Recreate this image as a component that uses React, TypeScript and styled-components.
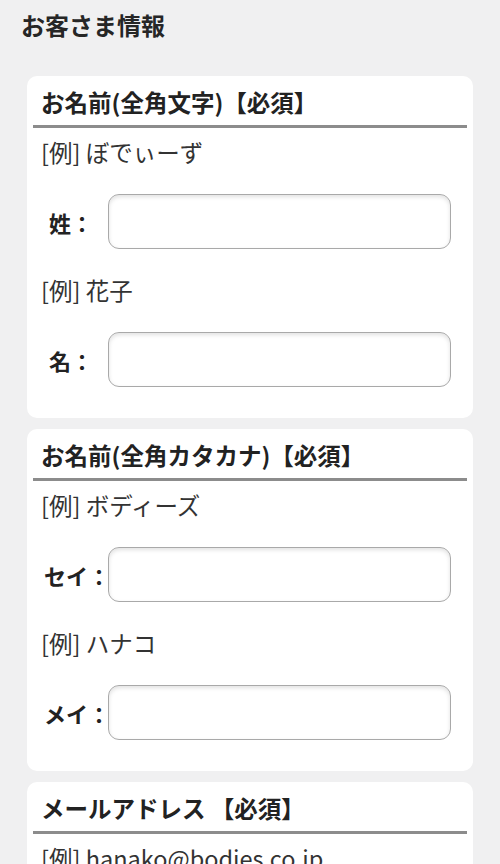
import React from "react";
import styled, { createGlobalStyle } from "styled-components";

const GlobalStyle = createGlobalStyle`
  html, body {
    margin: 0;
    padding: 0;
    background: #f0f0f1;
  }
  body {
    font-family: "Noto Sans CJK JP", "Noto Sans", "Liberation Sans", sans-serif;
    color: #222;
  }
`;

const Page = styled.div`
  padding: 0 27px 20px 27px;
  display: flex;
  flex-direction: column;
  gap: 11px;
`;

const PageTitle = styled.h1`
  margin: 0 0 -11px -6px;
  height: 76px;
  box-sizing: border-box;
  padding-top: 8px;
  font-size: 24px;
  line-height: 34px;
  font-weight: 700;
  color: #262626;
`;

const Card = styled.section`
  background: #fff;
  border-radius: 10px;
  padding: 0 6px 31px 6px;
`;

const CardHeader = styled.h2`
  margin: 0;
  padding: 11px 0 8px 8px;
  font-size: 23.5px;
  line-height: 30px;
  font-weight: 700;
  color: #222;
  border-bottom: 3px solid #8c8c8c;
  white-space: nowrap;
`;

const Example = styled.p`
  margin: 9px 0 0 8px;
  font-size: 23.5px;
  line-height: 30px;
  color: #333;
  font-weight: 400;
  white-space: nowrap;
`;

const FieldRow = styled.div`
  display: flex;
  align-items: center;
  margin-top: 27px;
  margin-bottom: 26px;
  &:last-child {
    margin-bottom: 0;
  }
`;

const Label = styled.label<{ $indent: number }>`
  width: 75px;
  flex: 0 0 75px;
  box-sizing: border-box;
  padding-left: ${(p) => p.$indent}px;
  font-size: 22px;
  font-weight: 700;
  color: #222;
  white-space: nowrap;
`;

const Input = styled.input`
  flex: 0 0 343px;
  width: 343px;
  height: 55px;
  box-sizing: border-box;
  border: 1px solid #a9a9a9;
  border-radius: 11px;
  background: #fff;
  box-shadow: inset 0 2px 4px rgba(0, 0, 0, 0.12);
  font-size: 20px;
  padding: 0 10px;
  outline: none;
`;

type Field = { example: string; label: string; indent: number };
type Section = { title: string; fields: Field[] };

const sections: Section[] = [
  {
    title: "お名前(全角文字)【必須】",
    fields: [
      { example: "[例] ぼでぃーず", label: "姓：", indent: 16 },
      { example: "[例] 花子", label: "名：", indent: 16 },
    ],
  },
  {
    title: "お名前(全角カタカナ)【必須】",
    fields: [
      { example: "[例] ボディーズ", label: "セイ：", indent: 11 },
      { example: "[例] ハナコ", label: "メイ：", indent: 11 },
    ],
  },
  {
    title: "メールアドレス 【必須】",
    fields: [{ example: "[例] hanako@bodies.co.jp", label: "", indent: 0 }],
  },
];

export default function App() {
  return (
    <>
      <GlobalStyle />
      <Page>
        <PageTitle>お客さま情報</PageTitle>
        {sections.map((s) => (
          <Card key={s.title}>
            <CardHeader>{s.title}</CardHeader>
            {s.fields.map((f) => (
              <React.Fragment key={f.example}>
                <Example>{f.example}</Example>
                {f.label && (
                  <FieldRow>
                    <Label $indent={f.indent}>{f.label}</Label>
                    <Input type="text" />
                  </FieldRow>
                )}
              </React.Fragment>
            ))}
          </Card>
        ))}
      </Page>
    </>
  );
}
